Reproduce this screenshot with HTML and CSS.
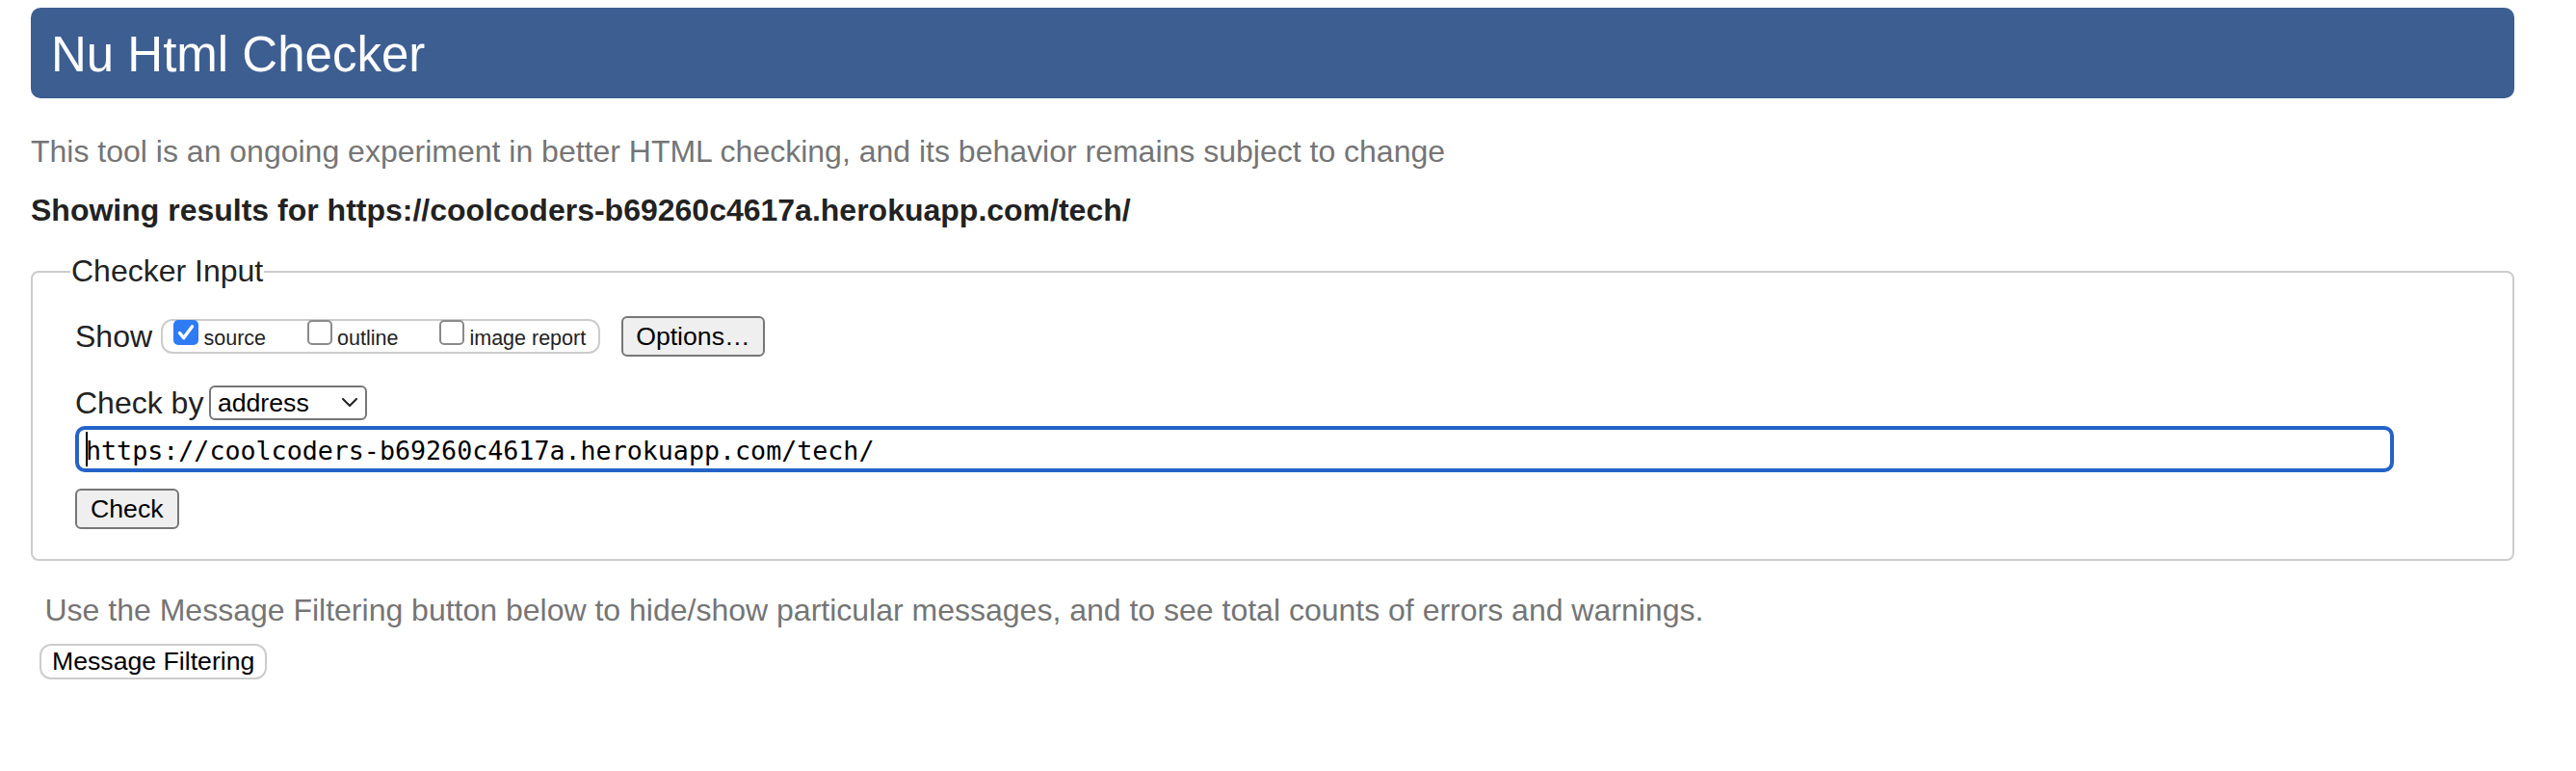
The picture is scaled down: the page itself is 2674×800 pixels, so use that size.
FILE: index.html
```html
<!DOCTYPE html>
<html lang="en">
<head>
<meta charset="utf-8">
<title>Nu Html Checker</title>
<link rel="stylesheet" href="styles.css">
</head>
<body>
<div class="page">
  <h1 class="masthead">Nu Html Checker</h1>
  <p class="intro">This tool is an ongoing experiment in better HTML checking, and its behavior remains subject to change</p>
  <p class="results-for">Showing results for https://coolcoders-b69260c4617a.herokuapp.com/tech/</p>
  <fieldset class="checker">
    <legend class="checker-legend">Checker Input</legend>
    <div class="show-row">
      <span class="row-label">Show</span>
      <span class="show-group">
        <label class="opt"><span class="cb cb-checked"><svg viewBox="0 0 26 26" width="26" height="26"><path d="M6.5 13.5 L10.8 18.6 L19.5 6.8" fill="none" stroke="#fff" stroke-width="3.4" stroke-linecap="round" stroke-linejoin="round"/></svg></span>source</label>
        <label class="opt"><span class="cb"></span>outline</label>
        <label class="opt"><span class="cb"></span>image report</label>
      </span>
      <button class="btn options-btn" type="button">Options…</button>
    </div>
    <div class="checkby-row">
      <span class="row-label">Check by</span>
      <span class="select"><span class="select-value">address</span><svg class="chevron" viewBox="0 0 16 9" width="16" height="9"><path d="M1 1 L8 8 L15 1" fill="none" stroke="#222" stroke-width="2" stroke-linecap="round" stroke-linejoin="round"/></svg></span>
    </div>
    <div class="url-field"><span class="caret"></span>https://coolcoders-b69260c4617a.herokuapp.com/tech/</div>
    <button class="btn check-btn" type="button">Check</button>
  </fieldset>
  <p class="filter-note">Use the Message Filtering button below to hide/show particular messages, and to see total counts of errors and warnings.</p>
  <button class="filter-btn" type="button">Message Filtering</button>
</div>
</body>
</html>
```
FILE: styles.css
```css
html, body {
  margin: 0;
  padding: 0;
  background: #fff;
}
body {
  font-family: "Liberation Sans", Arial, Helvetica, sans-serif;
  color: #222;
}
.page {
  padding: 8px 64px 0 32px;
}
.masthead {
  margin: 0;
  box-sizing: border-box;
  height: 94px;
  padding: 3px 0 0 21px;
  line-height: 91px;
  font-size: 51px;
  font-weight: normal;
  color: #fff;
  background: #3d5e91;
  border-radius: 10px;
}
.intro {
  margin: 37px 0 0 0;
  font-size: 32px;
  line-height: 37px;
  color: #757575;
}
.results-for {
  margin: 24px 0 0 0;
  font-size: 32px;
  line-height: 37px;
  font-weight: bold;
  color: #222;
}
.checker {
  margin: 26px 0 0 0;
  padding: 0 123px 31px 44px;
  border: 2px solid #cccccc;
  border-radius: 8px;
  min-width: 0;
}
.checker-legend {
  margin-left: -5px;
  padding: 0 1px;
  font-size: 32px;
  line-height: 37px;
  color: #222;
}
.row-label {
  font-size: 32px;
  line-height: 37px;
  color: #222;
}
.show-row {
  margin-top: 28px;
  display: flex;
  align-items: center;
  height: 42px;
}
.show-group {
  margin-left: 9px;
  box-sizing: border-box;
  height: 36px;
  display: flex;
  align-items: flex-start;
  padding: 0 13px 0 11px;
  border: 2px solid #cccccc;
  border-radius: 12px;
}
.opt {
  display: inline-flex;
  align-items: baseline;
  margin-top: -1px;
  font-size: 21.5px;
  line-height: 21px;
  color: #222;
  margin-right: 42.5px;
}
.opt:last-child {
  margin-right: 0;
}
.cb {
  box-sizing: border-box;
  display: block;
  width: 26px;
  height: 26px;
  margin-right: 5.5px;
  border: 2px solid #8a8a8a;
  border-radius: 5px;
  background: #fff;
}
.cb svg {
  display: block;
}
.cb-checked {
  border: none;
  background: #2f7bf5;
}
.btn {
  box-sizing: border-box;
  height: 42px;
  padding: 0 13px;
  font-family: "Liberation Sans", Arial, Helvetica, sans-serif;
  font-size: 26.67px;
  color: #000;
  background: #efefef;
  border: 2px solid #767676;
  border-radius: 6px;
}
.options-btn {
  margin-left: 22px;
}
.checkby-row {
  margin-top: 30px;
  display: flex;
  align-items: center;
  height: 36px;
}
.select {
  margin-left: 5.5px;
  box-sizing: border-box;
  width: 164px;
  height: 36px;
  display: flex;
  align-items: center;
  justify-content: space-between;
  padding: 0 8px 0 7px;
  border: 2px solid #767676;
  border-radius: 6px;
  background: #fff;
  font-size: 26.67px;
  color: #000;
}
.chevron {
  display: block;
  margin-top: -2px;
}
.url-field {
  margin-top: 6px;
  box-sizing: border-box;
  height: 48px;
  padding: 2px 0 0 7px;
  border: 4px solid #2463c8;
  border-radius: 10px;
  font-family: "DejaVu Sans Mono", "Liberation Mono", monospace;
  font-size: 26.67px;
  line-height: 35px;
  color: #000;
  white-space: nowrap;
  overflow: hidden;
}
.caret {
  display: inline-block;
  width: 2px;
  height: 36px;
  margin-right: -2px;
  vertical-align: -7px;
  background: #000;
}
.check-btn {
  display: block;
  margin-top: 17px;
  padding: 0 14px;
}
.filter-note {
  margin: 33px 0 0 0;
  padding-left: 14.5px;
  font-size: 32px;
  line-height: 37px;
  color: #757575;
}
.filter-btn {
  display: block;
  margin: 16px 0 0 9px;
  box-sizing: border-box;
  height: 37px;
  padding: 0 11px;
  font-family: "Liberation Sans", Arial, Helvetica, sans-serif;
  font-size: 26.67px;
  color: #000;
  background: #fff;
  border: 2px solid #cccccc;
  border-radius: 12px;
}
```
